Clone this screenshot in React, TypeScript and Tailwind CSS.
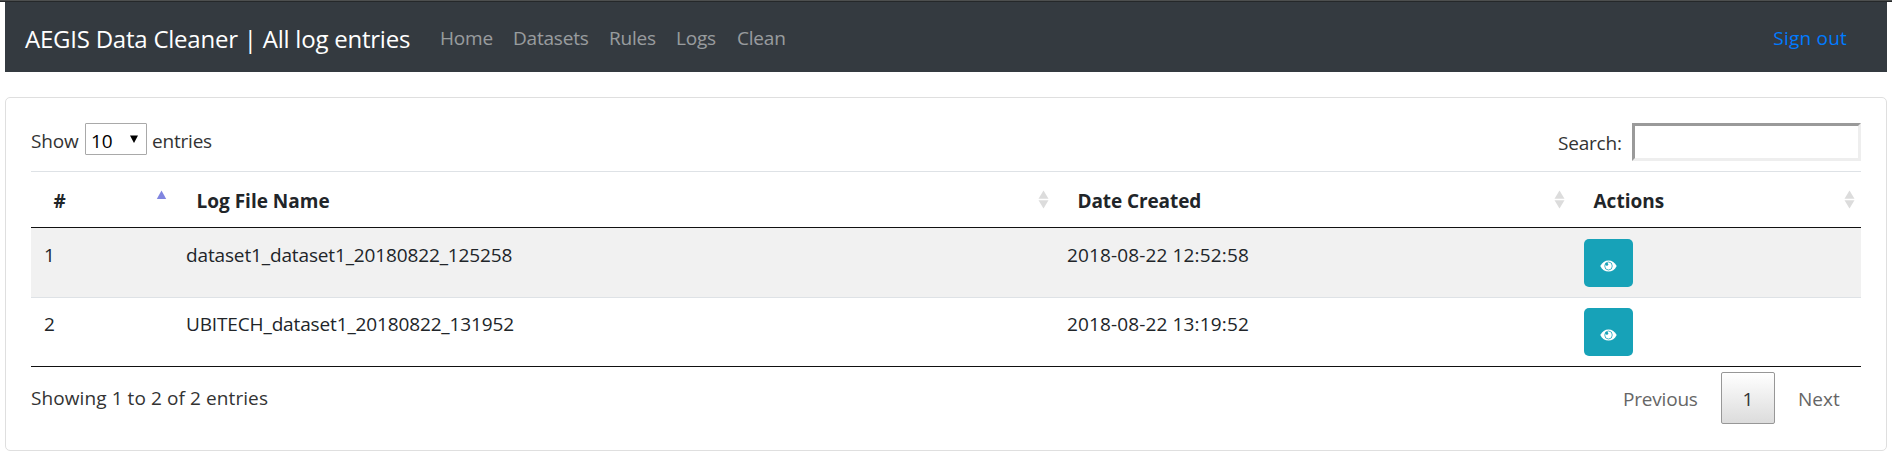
import React from "react";

const navItems = [
  { label: "Home", cls: "w-[73px]" },
  { label: "Datasets", cls: "w-[96px]" },
  { label: "Rules", cls: "w-[67px]" },
  { label: "Logs", cls: "w-[61px]" },
  { label: "Clean", cls: "" },
];

const columns = [
  { label: "#", sorted: true, cls: "w-[143px] pr-[7px]" },
  { label: "Log File Name", sorted: false, cls: "w-[881px] pr-[6px]" },
  { label: "Date Created", sorted: false, cls: "w-[516px] pr-[6px] tracking-[-0.1px]" },
  { label: "Actions", sorted: false, cls: "w-[290px] pr-[6px]" },
];

const rows = [
  {
    id: 1,
    name: "dataset1_dataset1_20180822_125258",
    date: "2018-08-22 12:52:58",
    cls: "bg-[#f1f1f1] h-[70px] pt-[11px] border-b border-[#dee2e6]",
  },
  {
    id: 2,
    name: "UBITECH_dataset1_20180822_131952",
    date: "2018-08-22 13:19:52",
    cls: "bg-white h-[68px] pt-[10px]",
  },
];

function SortIcon({ sorted }: { sorted: boolean }) {
  return (
    <svg width="11" height="19" viewBox="0 0 11 19" className="mb-[1px] shrink-0">
      {sorted ? (
        <path d="M5.5 0.5 10.2 9H0.8Z" fill="#8085e0" />
      ) : (
        <>
          <path d="M5.5 0.5 10.5 8.8H0.5Z" fill="#dcdcdc" />
          <path d="M0.5 10.2H10.5L5.5 18.5Z" fill="#dcdcdc" />
        </>
      )}
    </svg>
  );
}

function EyeButton() {
  return (
    <button className="flex h-12 w-[49px] items-center justify-center rounded-[5px] bg-[#17a2b8] pt-[5px]" aria-label="View">
      <svg width="17" height="12" viewBox="0 0 18 12" preserveAspectRatio="none">
        <path d="M0.3 6C2.2 2.4 5.3 0.4 9 0.4S15.8 2.4 17.7 6C15.8 9.6 12.7 11.6 9 11.6S2.2 9.6 0.3 6Z" fill="#fff" />
        <circle cx="9" cy="6" r="4" fill="none" stroke="#17a2b8" strokeWidth="0.8" />
        <circle cx="7.2" cy="4.3" r="1.5" fill="#17a2b8" />
      </svg>
    </button>
  );
}

export default function App() {
  return (
    <div className="h-[457px] overflow-hidden bg-white font-['Open_Sans',sans-serif] text-[19px] leading-[30px] text-[#212529]">
      <div className="h-px bg-[#4d4f4f]" />
      <div className="h-px bg-[#25282a]" />
      <nav className="mx-[5px] flex h-[70px] items-center bg-[#343a40] pl-5 pr-10 pt-[2px]">
        <span className="w-[415px] whitespace-nowrap text-2xl leading-[37px] tracking-[-0.23px] text-white">
          AEGIS Data Cleaner | All log entries
        </span>
        <div className="flex tracking-[-0.2px] text-white/50">
          {navItems.map((n) => (
            <a key={n.label} className={`whitespace-nowrap ${n.cls}`}>{n.label}</a>
          ))}
        </div>
        <a className="ml-auto tracking-[0.22px] text-[#007bff]">Sign out</a>
      </nav>

      <main className="mx-[5px] mt-[25px] h-[354px] rounded-[5px] border border-[#dfdfdf] px-[25px] pt-[25px]">
        <div className="flex h-12 justify-between tracking-[-0.2px] text-[#333]">
          <div className="flex h-8 items-center">
            <span className="w-[54px] pt-[3px]">Show</span>
            <div className="flex h-8 w-[62px] items-center justify-between rounded-[1px] border border-[#a9a9a9] pl-[5px] pr-2 text-black">
              <span className="pt-[3px]">10</span>
              <svg width="8" height="8" viewBox="0 0 8 8"><path d="M0 0.5H8L4 8Z" /></svg>
            </div>
            <span className="ml-[5px] pt-[3px]">entries</span>
          </div>
          <div className="flex h-[38px] items-center">
            <span className="w-[74px] pt-[2px]">Search:</span>
            <input className="h-[38px] w-[229px] border-[3px] border-t-[#9a9a9a] border-l-[#9a9a9a] border-r-[#eee] border-b-[#eee] outline-none" />
          </div>
        </div>

        <div className="flex h-[57px] border-b border-t border-b-[#111] border-t-[#dee2e6] font-bold">
          {columns.map((c) => (
            <div key={c.label} className={`flex items-center justify-between pl-[22.5px] ${c.cls}`}>
              <span className="pt-[2px]">{c.label}</span>
              <SortIcon sorted={c.sorted} />
            </div>
          ))}
        </div>
        <div className="border-b border-[#111]">
          {rows.map((r) => (
            <div key={r.id} className={`flex ${r.cls}`}>
              <div className="w-[143px] pl-[13px] pt-px">{r.id}</div>
              <div className="w-[881px] pl-3 pt-px tracking-[-0.14px]">{r.name}</div>
              <div className="w-[516px] pl-3 pt-px tracking-[0.14px]">{r.date}</div>
              <div className="pl-[13px]"><EyeButton /></div>
            </div>
          ))}
        </div>

        <div className="flex justify-between pt-[5px] text-[#333]">
          <span className="pt-[11px] tracking-[0.09px]">Showing 1 to 2 of 2 entries</span>
          <div className="flex h-[52px] items-center text-[#666]">
            <span className="w-[98px] pt-px tracking-[-0.2px]">Previous</span>
            <span className="flex h-[52px] w-[54px] items-center justify-center rounded-[2px] border border-[#979797] bg-gradient-to-b from-white to-[#dcdcdc] pt-px text-[#333]">1</span>
            <span className="w-[86px] pl-[23px] pt-px">Next</span>
          </div>
        </div>
      </main>
    </div>
  );
}
